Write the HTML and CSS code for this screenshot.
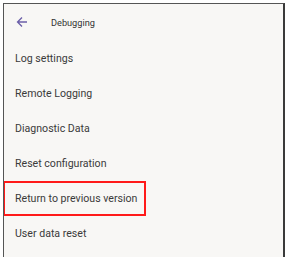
FILE: index.html
```html
<!DOCTYPE html>
<html lang="en">
<head>
    <meta charset="utf-8">
    <title>Debugging</title>
    <link rel="stylesheet" href="styles.css">
</head>
<body>
    <div class="screen">
        <!-- Barra superiore -->
        <div class="header">
            <svg class="back" width="12" height="12" viewBox="0 0 12 12">
                <path d="M11 6H1.5M6 1.5L1.5 6L6 10.5" fill="none" stroke="#6b5fa8" stroke-width="1.3"/>
            </svg>
            <span class="header-title">Debugging</span>
        </div>

        <!-- Voci di menu -->
        <div class="menu">
            <div class="item">Log settings</div>
            <div class="item">Remote Logging</div>
            <div class="item">Diagnostic Data</div>
            <div class="item">Reset configuration</div>
            <div class="item highlight">Return to previous version</div>
            <div class="item">User data reset</div>
        </div>
    </div>
</body>
</html>
```

FILE: styles.css
```css
body {
    margin: 0;
    padding: 0;
    background-color: #ffffff;
    font-family: Roboto, "Liberation Sans", sans-serif;
}
.screen {
    margin: 3px 0 0 3px;
    width: 279px;
    height: 254px;
    overflow: hidden;
    background-color: #f8f7f5;
    border-top: 1px solid #555555;
    border-left: 1px solid #555555;
    border-right: 2px solid #3a3a3a;
}
.header {
    display: flex;
    align-items: center;
    height: 32px;
    padding-top: 2px;
    padding-left: 12px;
}
.back {
    margin-right: 23px;
}
.header-title {
    font-size: 9.2px;
    color: #333333;
}
.menu {
    display: flex;
    flex-direction: column;
    padding-top: 3px;
}
.item {
    box-sizing: border-box;
    height: 35px;
    display: flex;
    align-items: center;
    padding-left: 11px;
    font-size: 10.6px;
    color: #3a3a3a;
    white-space: nowrap;
}
.highlight {
    width: 143px;
    border: 2px solid #ff1a1a;
    margin-left: -1px;
    padding-left: 10px;
}
```
